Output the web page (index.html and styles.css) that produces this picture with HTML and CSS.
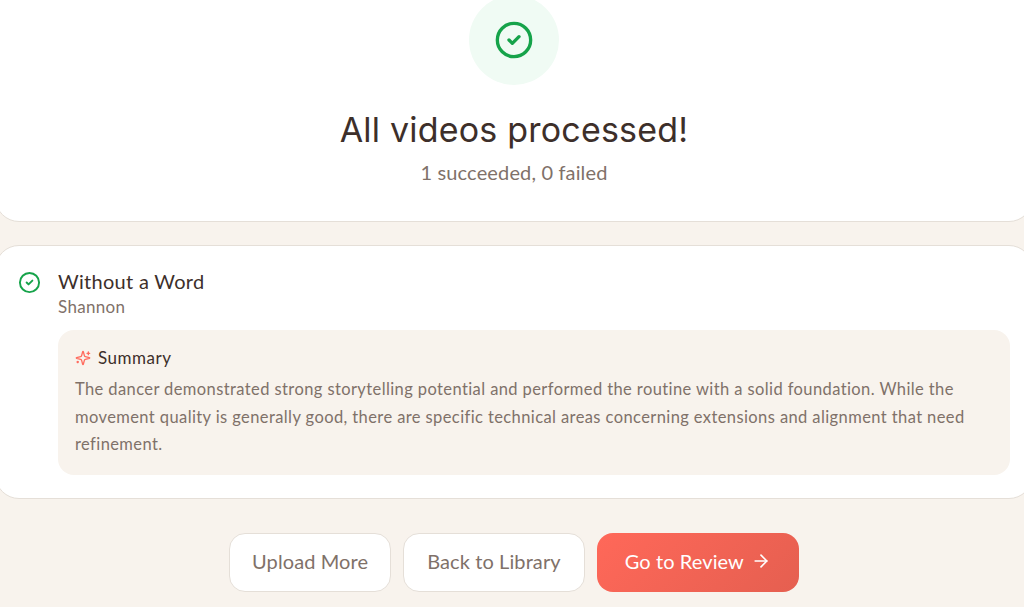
FILE: index.html
```html
<!DOCTYPE html>
<html lang="en">

	<head>
		<meta charset="UTF-8">
		<title>Upload complete</title>
		<link rel="stylesheet" href="styles.css">
	</head>

	<body>
		<div class="page">
			<div class="card done-card">
				<div class="done-circle">
					<svg class="done-icon" viewBox="0 0 24 24">
						<circle cx="12" cy="12" r="10"></circle>
						<path d="m9 12 2 2 4-4"></path>
					</svg>
				</div>
				<h1>All videos processed!</h1>
				<p class="done-count">1 succeeded, 0 failed</p>
			</div>

			<div class="card result-card">
				<svg class="result-icon" viewBox="0 0 24 24">
					<circle cx="12" cy="12" r="10"></circle>
					<path d="m9 12 2 2 4-4"></path>
				</svg>
				<div class="result-body">
					<div class="result-title">Without a Word</div>
					<div class="result-name">Shannon</div>
					<div class="summary">
						<div class="summary-head">
							<svg class="spark-icon" viewBox="0 0 24 24">
								<path d="M9.94 15.5A2 2 0 0 0 8.5 14.06l-6.14-1.58a.5.5 0 0 1 0-.96L8.5 9.94A2 2 0 0 0 9.94 8.5l1.58-6.14a.5.5 0 0 1 .96 0l1.58 6.14a2 2 0 0 0 1.44 1.44l6.14 1.58a.5.5 0 0 1 0 .96l-6.14 1.58a2 2 0 0 0-1.44 1.44l-1.58 6.14a.5.5 0 0 1-.96 0z"></path>
								<path d="M20 3v4"></path>
								<path d="M22 5h-4"></path>
								<path d="M4 17v2"></path>
								<path d="M5 18H3"></path>
							</svg>
							<span>Summary</span>
						</div>
						<p>The dancer demonstrated strong storytelling potential and performed the routine with a solid foundation. While the movement quality is generally good, there are specific technical areas concerning extensions and alignment that need refinement.</p>
					</div>
				</div>
			</div>

			<div class="actions">
				<a href="#" class="btn btn-plain btn-upload">Upload More</a>
				<a href="#" class="btn btn-plain">Back to Library</a>
				<a href="#" class="btn btn-main">
					Go to Review
					<svg class="arrow-icon" viewBox="0 0 24 24">
						<path d="M5 12h14"></path>
						<path d="m12 5 7 7-7 7"></path>
					</svg>
				</a>
			</div>
		</div>
	</body>

</html>
```

FILE: styles.css
```css
html,
body {
	margin: 0;
	padding: 0;
	height: 100%;
	overflow: hidden;
	background-color: #f8f3ed;
}

body {
	font-family: "Lato", "Noto Sans", sans-serif;
	color: #3d2f2a;
}

/* the screenshot is scrolled, so the column starts above and left of the window */
.page {
	width: 1038px;
	margin: -29px 0 0 -5px;
}

svg {
	fill: none;
	stroke-linecap: round;
	stroke-linejoin: round;
}

.card {
	box-sizing: border-box;
	background-color: #fff;
	border: 1px solid #e5dfd8;
	border-radius: 24px;
}

.done-card {
	display: flex;
	flex-direction: column;
	align-items: center;
	height: 251px;
	padding-top: 23px;
}

.done-circle {
	display: flex;
	align-items: center;
	justify-content: center;
	width: 90px;
	height: 90px;
	border-radius: 50%;
	background-color: #f0fbf4;
}

.done-icon {
	width: 40px;
	height: 40px;
	stroke: #16a34a;
	stroke-width: 2;
}

h1 {
	margin: 20px 0 0;
	font-family: "Inter", sans-serif;
	font-size: 34px;
	line-height: 50px;
	font-weight: 400;
	letter-spacing: 0.2px;
}

.done-count {
	margin: 3px 0 0;
	font-size: 20px;
	line-height: 28px;
	letter-spacing: 0.15px;
	color: #7f7169;
}

.result-card {
	display: flex;
	gap: 17px;
	height: 254px;
	margin-top: 23px;
	padding: 23px 22px;
}

.result-icon {
	flex: none;
	width: 23px;
	height: 23px;
	margin-top: 2px;
	stroke: #16a34a;
	stroke-width: 2;
}

.result-body {
	flex: 1;
}

.result-title {
	font-size: 20px;
	line-height: 25px;
	letter-spacing: 0.3px;
}

.result-name {
	margin-top: 2px;
	font-size: 17px;
	line-height: 22px;
	letter-spacing: 0.3px;
	color: #7f7169;
}

.summary {
	margin-top: 12px;
	padding: 16px 17px;
	background-color: #f8f3ed;
	border-radius: 16px;
}

.summary-head {
	display: flex;
	align-items: center;
	gap: 7px;
	font-size: 17px;
	line-height: 24px;
	letter-spacing: 0.5px;
}

.spark-icon {
	width: 16px;
	height: 16px;
	stroke: #ff6b5e;
	stroke-width: 2;
}

.summary p {
	margin: 6px 0 0;
	font-size: 16.5px;
	line-height: 27.5px;
	letter-spacing: 0.4px;
	color: #7f7169;
}

.actions {
	display: flex;
	justify-content: center;
	gap: 12px;
	margin-top: 34px;
}

.btn {
	display: flex;
	align-items: center;
	gap: 7px;
	box-sizing: border-box;
	height: 59px;
	padding: 0 23px 3px;
	border-radius: 16px;
	font-size: 20px;
	letter-spacing: 0.1px;
	text-decoration: none;
}

.btn-plain {
	background-color: #fff;
	border: 1px solid #e5dfd8;
	color: #7f7169;
}

.btn-upload {
	padding: 0 22px 3px;
}

.btn-main {
	padding: 0 28px 3px;
	background: linear-gradient(135deg, #ff6859, #e55f50);
	color: #fff;
}

.arrow-icon {
	width: 20px;
	height: 20px;
	stroke: #fff;
	stroke-width: 2;
}
```
